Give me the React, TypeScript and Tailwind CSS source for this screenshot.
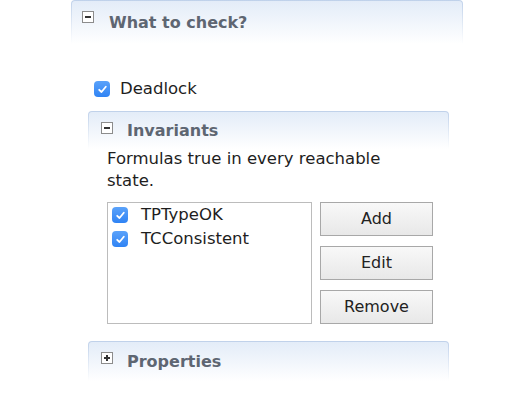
import React from "react";

function ToggleIcon({ plus }: { plus?: boolean }) {
  return (
    <span className="relative block w-[12px] h-[12px] border border-[#8c8c8c] bg-white shrink-0">
      <span className="absolute left-[2px] top-[4px] w-[6px] h-[2px] bg-[#333]" />
      {plus ? <span className="absolute left-[4px] top-[2px] w-[2px] h-[6px] bg-[#333]" /> : null}
    </span>
  );
}

function Check() {
  return (
    <span className="flex items-center justify-center w-[16px] h-[16px] rounded-[4px] bg-gradient-to-b from-[#5aa2fa] to-[#2f83f4] shrink-0">
      <svg width="11" height="11" viewBox="0 0 11 11" fill="none">
        <path d="M2.2 5.8 L4.5 8 L8.8 2.8" stroke="white" strokeWidth="1.8" strokeLinecap="round" strokeLinejoin="round" />
      </svg>
    </span>
  );
}

function Header({ title, plus, h, padL, iconTop, textGap, textTop }: { title: string; plus?: boolean; h: string; padL: string; iconTop: string; textGap: string; textTop: string }) {
  return (
    <div className={`${h} rounded-t-[4px] bg-gradient-to-b from-[#bfd1ea] to-[#bfd1ea]/0 px-px pt-px`}>
      <div className={`h-full rounded-t-[3px] bg-gradient-to-b from-[#e3ecf8] to-white flex items-start ${padL}`}>
        <span className={iconTop}>
          <ToggleIcon plus={plus} />
        </span>
        <span className={`${textGap} ${textTop} text-[16px] leading-[20px] font-bold text-[#5e6672]`}>{title}</span>
      </div>
    </div>
  );
}

function Btn({ label }: { label: string }) {
  return (
    <button className="h-[34px] w-[113px] border border-[#a8a8a8] bg-gradient-to-b from-[#f8f8f8] to-[#e8e8e8] text-[16px] leading-[20px] text-[#222]">
      {label}
    </button>
  );
}

export default function App() {
  return (
    <div className="w-[532px] h-[400px] bg-white overflow-hidden text-[#1e1e1e]" style={{ fontFamily: '"DejaVu Sans", sans-serif' }}>
      <div className="ml-[71px] w-[392px]">
        <Header title="What to check?" h="h-[44px]" padL="pl-[10px]" iconTop="mt-[10px]" textGap="ml-[15px]" textTop="mt-[12px]" />
        <div className="mt-[35px] ml-[23px] flex items-center h-[20px]">
          <Check />
          <span className="ml-[10px] text-[16.5px] leading-[20px]">Deadlock</span>
        </div>
        <div className="mt-[12px] ml-[17px] mr-[14px]">
          <Header title="Invariants" h="h-[38px]" padL="pl-[12px]" iconTop="mt-[10px]" textGap="ml-[14px]" textTop="mt-[9px]" />
          <div className="-mt-[1px] pl-[19px] w-[330px] text-[16.5px] leading-[22px]">
            Formulas true in every reachable state.
          </div>
          <div className="mt-[10px] ml-[19px] flex gap-[8px]">
            <div className="w-[205px] h-[122px] border border-[#bcbcbc] bg-white pl-[4px]">
              <div className="flex items-center h-[24px]">
                <Check />
                <span className="ml-[13px] text-[16.5px] leading-[20px]">TPTypeOK</span>
              </div>
              <div className="flex items-center h-[24px]">
                <Check />
                <span className="ml-[13px] text-[16.5px] leading-[20px]">TCConsistent</span>
              </div>
            </div>
            <div className="flex flex-col gap-[10px]">
              <Btn label="Add" />
              <Btn label="Edit" />
              <Btn label="Remove" />
            </div>
          </div>
          <div className="mt-[17px]">
            <Header title="Properties" plus h="h-[40px]" padL="pl-[12px]" iconTop="mt-[10px]" textGap="ml-[14px]" textTop="mt-[10px]" />
          </div>
        </div>
      </div>
    </div>
  );
}
